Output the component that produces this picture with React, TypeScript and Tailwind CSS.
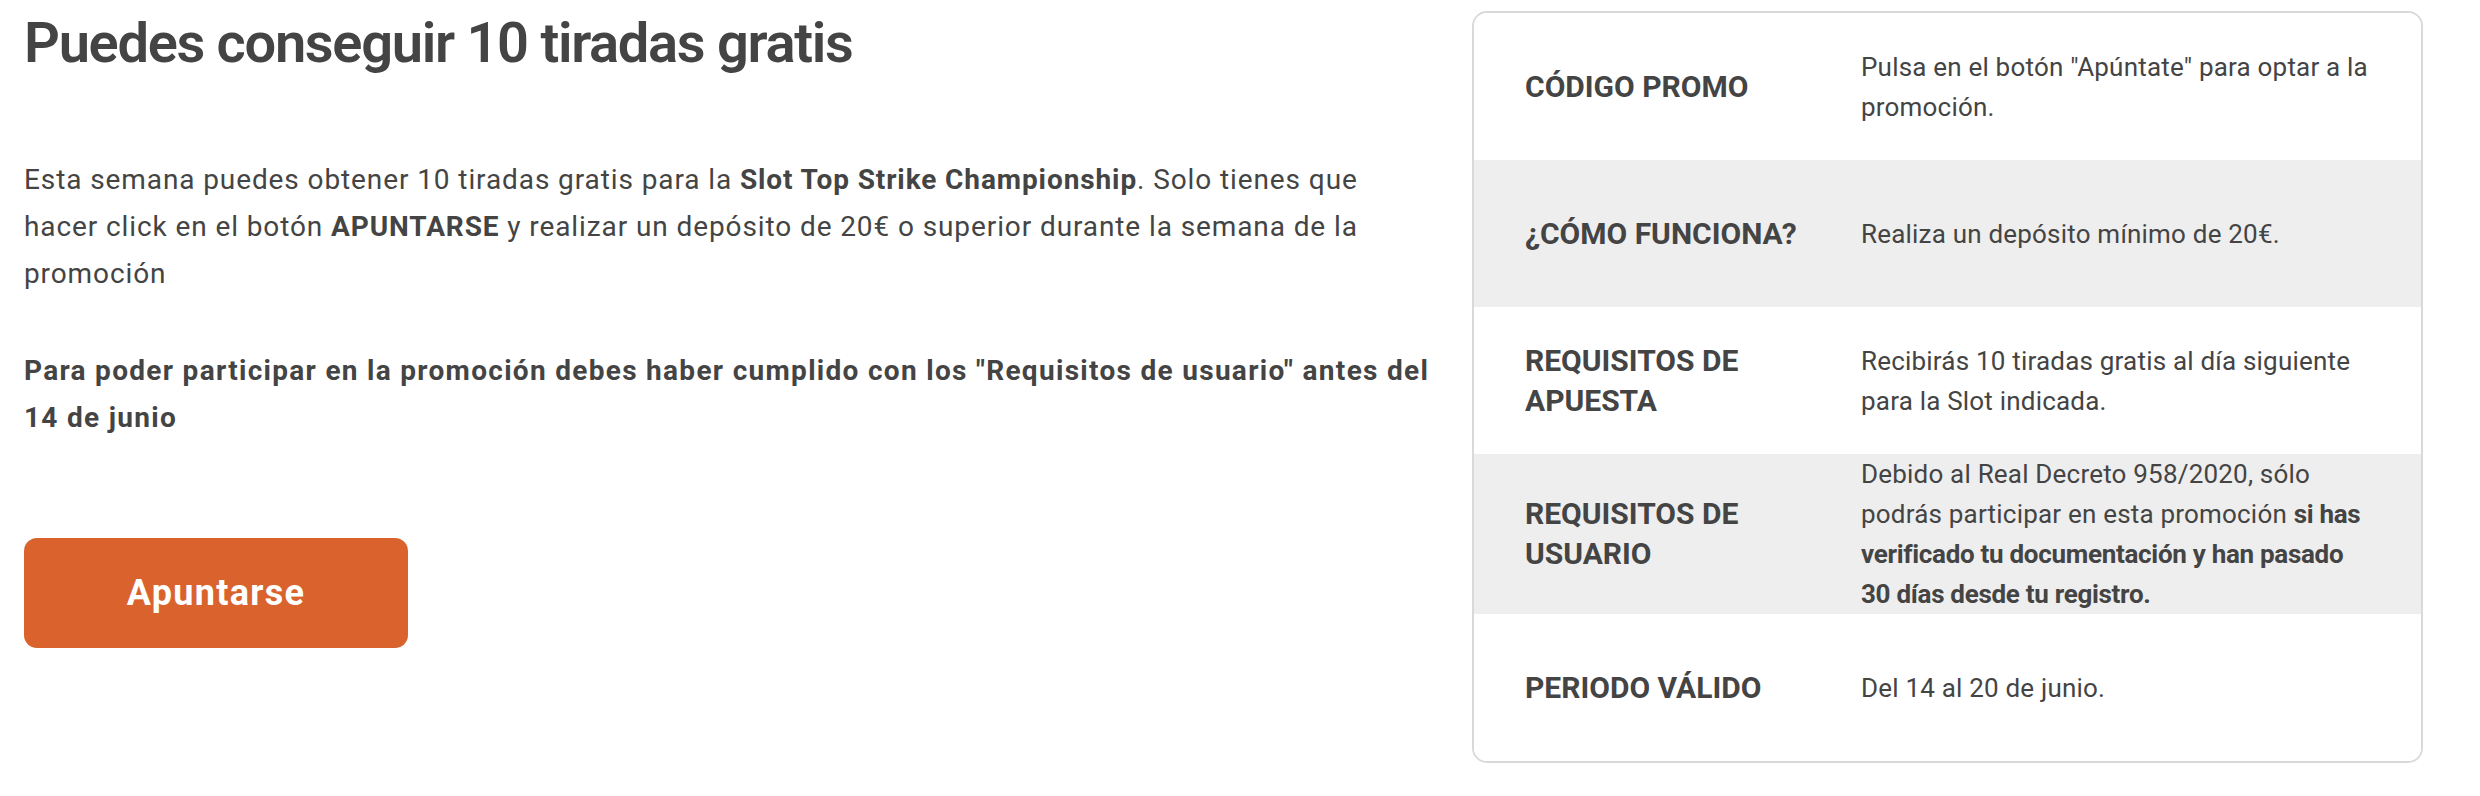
import React from "react";

type Row = {
  label: string;
  value: React.ReactNode;
  shaded: boolean;
};

const rows: Row[] = [
  {
    label: "CÓDIGO PROMO",
    value: <>Pulsa en el botón "Apúntate" para optar a la promoción.</>,
    shaded: false,
  },
  {
    label: "¿CÓMO FUNCIONA?",
    value: <>Realiza un depósito mínimo de 20€.</>,
    shaded: true,
  },
  {
    label: "REQUISITOS DE APUESTA",
    value: <>Recibirás 10 tiradas gratis al día siguiente para la Slot indicada.</>,
    shaded: false,
  },
  {
    label: "REQUISITOS DE USUARIO",
    value: (
      <>
        Debido al Real Decreto 958/2020, sólo podrás participar en esta promoción{" "}
        <strong className="font-bold tracking-[-0.3px]">
          si has verificado tu documentación y han pasado 30 días desde tu registro.
        </strong>
      </>
    ),
    shaded: true,
  },
  {
    label: "PERIODO VÁLIDO",
    value: <>Del 14 al 20 de junio.</>,
    shaded: false,
  },
];

const App: React.FC = () => {
  return (
    <div className="flex gap-[38px] px-[24px] pt-[11px] text-[#444444] font-['Roboto',sans-serif]">
      {/* Columna izquierda */}
      <div className="w-[1410px] shrink-0">
        <h1 className="mt-[4px] text-[56px] leading-none font-semibold tracking-[-1.3px]">
          Puedes conseguir 10 tiradas gratis
        </h1>

        <p className="mt-[85px] text-[28px] leading-[47px] tracking-[0.9px]">
          Esta semana puedes obtener 10 tiradas gratis para la{" "}
          <strong className="font-bold">Slot Top Strike Championship</strong>. Solo tienes que
          hacer click en el botón <strong className="font-bold">APUNTARSE</strong> y realizar un
          depósito de 20€ o superior durante la semana de la promoción
        </p>

        <p className="mt-[50px] text-[28px] leading-[47px] font-bold tracking-[1.3px]">
          Para poder participar en la promoción debes haber cumplido con los "Requisitos de
          usuario" antes del 14 de junio
        </p>

        <button className="mt-[97px] block w-[384px] h-[110px] rounded-[13px] bg-[#da632d] text-white text-[36px] font-bold tracking-[1.3px]">
          Apuntarse
        </button>
      </div>

      {/* Tabla de condiciones */}
      <div className="w-[951px] shrink-0 self-start overflow-hidden rounded-[15px] border-2 border-[#d9d9d9]">
        {rows.map((row) => (
          <div
            key={row.label}
            className={`flex items-center min-h-[147px] pl-[51px] ${
              row.shaded ? "bg-[#eeeeee]" : "bg-white"
            }`}
          >
            <div className="w-[310px] shrink-0 text-[30px] leading-[40px] font-bold">
              {row.label}
            </div>
            <div className="ml-[26px] w-[513px] text-[26px] leading-[40px] tracking-[0.2px]">
              {row.value}
            </div>
          </div>
        ))}
      </div>
    </div>
  );
};

export default App;
